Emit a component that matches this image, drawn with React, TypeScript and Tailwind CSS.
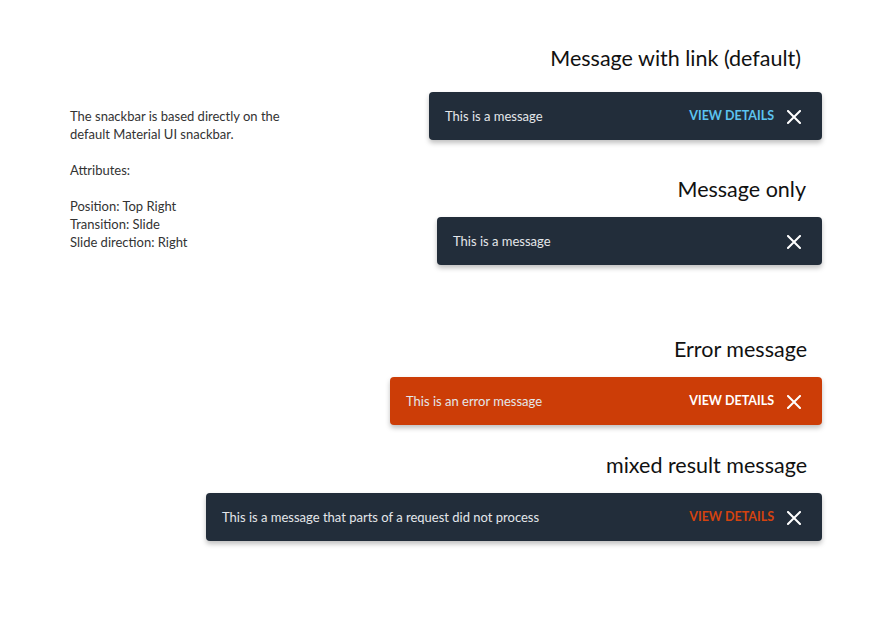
type SnackProps = {
  message: string;
  width: string;
  variant?: "default" | "error";
  link?: "blue" | "white" | "orange";
};

function CloseIcon() {
  return (
    <svg width="14" height="14" viewBox="0 0 14 14" className="shrink-0">
      <path d="M1 1L13 13M13 1L1 13" stroke="white" strokeWidth="2" strokeLinecap="square" />
    </svg>
  );
}

function Snackbar({ message, width, variant = "default", link }: SnackProps) {
  const bg = variant === "error" ? "bg-[#cc3d07]" : "bg-[#222d3a]";
  const linkColor =
    link === "blue" ? "text-[#5cc3f0]" : link === "orange" ? "text-[#d4430f]" : "text-white";
  return (
    <div
      className={`${bg} ${width} flex h-12 items-center rounded pl-4 pr-[21px] pt-px shadow-[0_3px_5px_rgba(0,0,0,0.25)]`}
    >
      <span className="flex-1 text-[13px] text-[#e4e7ea]">{message}</span>
      {link && (
        <span className={`${linkColor} mr-[13px] text-[12.5px] font-bold`}>VIEW DETAILS</span>
      )}
      <CloseIcon />
    </div>
  );
}

export default function App() {
  return (
    <div
      className="flex h-[622px] w-[880px] justify-between bg-white"
      style={{ fontFamily: "Lato, 'Noto Sans', sans-serif" }}
    >
      {/* left description */}
      <div className="w-[206px] shrink-0 whitespace-nowrap pl-[70px] pt-[107px] text-[13px] leading-[18px] text-[#333]">
        <p>
          The snackbar is based directly on the
          <br />
          default Material UI snackbar.
        </p>
        <p className="mt-[18px]">Attributes:</p>
        <p className="mt-[18px]">
          Position: Top Right
          <br />
          Transition: Slide
          <br />
          Slide direction: Right
        </p>
      </div>

      {/* right examples */}
      <div className="flex flex-col items-end pr-[58px] pt-[43px]">
        <h2 className="mr-[21px] text-[21.5px] leading-[30px] text-[#111]">
          Message with link (default)
        </h2>
        <div className="mt-[19px]">
          <Snackbar message="This is a message" width="w-[393px]" link="blue" />
        </div>

        <h2 className="mr-[16px] mt-[34px] text-[21.5px] leading-[30px] text-[#111]">
          Message only
        </h2>
        <div className="mt-[13px]">
          <Snackbar message="This is a message" width="w-[385px]" />
        </div>

        <h2 className="mr-[15px] mt-[69px] text-[21.5px] leading-[30px] text-[#111]">
          Error message
        </h2>
        <div className="mt-[13px]">
          <Snackbar
            message="This is an error message"
            width="w-[432px]"
            variant="error"
            link="white"
          />
        </div>

        <h2 className="mr-[15px] mt-[25px] text-[21.5px] leading-[30px] text-[#111]">
          mixed result message
        </h2>
        <div className="mt-[13px]">
          <Snackbar
            message="This is a message that parts of a request did not process"
            width="w-[616px]"
            link="orange"
          />
        </div>
      </div>
    </div>
  );
}
